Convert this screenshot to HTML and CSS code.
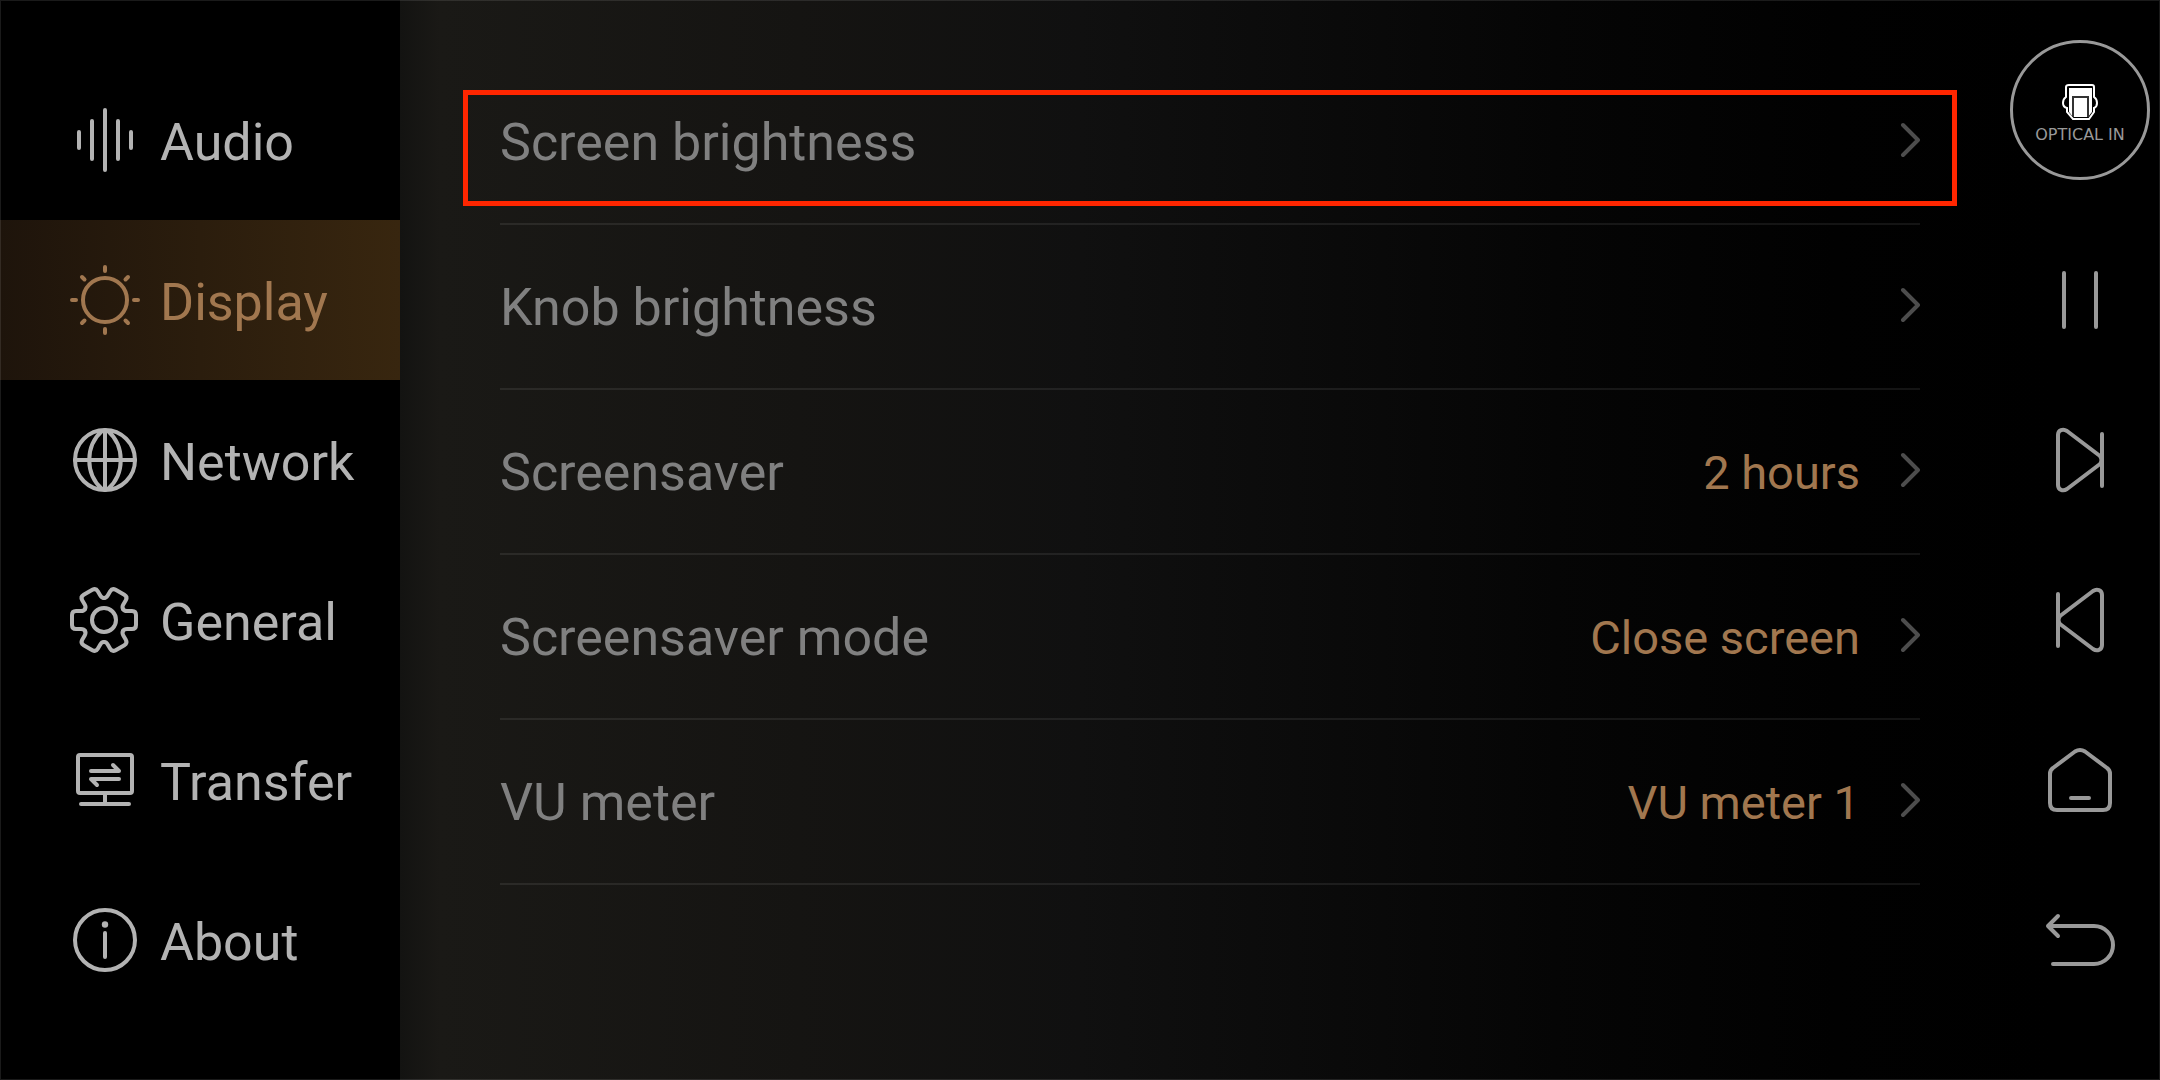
FILE: index.html
```html
<!DOCTYPE html>
<html lang="en">
  <head>
    <meta charset="UTF-8" />
    <meta name="viewport" content="width=device-width, initial-scale=1.0" />
    <title>Display settings</title>
    <link rel="stylesheet" href="styles.css">
  </head>
  <body>
    <div class="screen">
      <nav class="menu">
        <a href="#audio">
          <svg class="icon" viewBox="-35 -35 70 70" aria-hidden="true">
            <path d="M-26 -8V8M-13 -19V19M0 -30V30M13 -19V19M26 -8V8" />
          </svg>
          <span class="label">Audio</span>
        </a>
        <a href="#display" class="active" aria-current="page">
          <svg class="icon" viewBox="-35 -35 70 70" aria-hidden="true">
            <circle r="22" />
            <path d="M0 -33V-29M0 29V33M-33 0H-29M29 0H33M-23 -23L-20.5 -20.5M23 -23L20.5 -20.5M-23 23L-20.5 20.5M23 23L20.5 20.5" />
          </svg>
          <span class="label">Display</span>
        </a>
        <a href="#network">
          <svg class="icon" viewBox="-35 -35 70 70" aria-hidden="true">
            <circle r="30" />
            <path d="M-30 0H30M0 -30V30M-3 -29C-20 -14 -20 14 -3 29M3 -29C20 -14 20 14 3 29" />
          </svg>
          <span class="label">Network</span>
        </a>
        <a href="#general">
          <svg class="icon" viewBox="-34 -35 70 70" aria-hidden="true">
            <defs>
              <path id="tooth" d="M19 -11Q20 -9 23 -9H28Q32 -9 32 -5V5Q32 9 28 9H23Q20 9 19 11" />
            </defs>
            <use href="#tooth" />
            <use href="#tooth" transform="rotate(60)" />
            <use href="#tooth" transform="rotate(120)" />
            <use href="#tooth" transform="rotate(180)" />
            <use href="#tooth" transform="rotate(240)" />
            <use href="#tooth" transform="rotate(300)" />
            <circle r="12" />
          </svg>
          <span class="label">General</span>
        </a>
        <a href="#transfer">
          <svg class="icon" viewBox="-35 -35 70 70" aria-hidden="true">
            <rect x="-27" y="-25" width="54" height="38" rx="2" />
            <path d="M0 13V24M-24 24H24M-14 -9H14L8 -15M14 -1H-14L-8 5" />
          </svg>
          <span class="label">Transfer</span>
        </a>
        <a href="#about">
          <svg class="icon" viewBox="-35 -35 70 70" aria-hidden="true">
            <circle r="30" />
            <circle class="solid" cy="-15.5" r="3.2" />
            <path d="M0 -7V17" />
          </svg>
          <span class="label">About</span>
        </a>
      </nav>

      <main class="settings">
        <button class="row selected" type="button">
          <span class="label">Screen brightness</span>
          <svg class="chevron" viewBox="0 0 20 36" aria-hidden="true"><path d="M3 3L18 18L3 33" /></svg>
        </button>
        <button class="row" type="button">
          <span class="label">Knob brightness</span>
          <svg class="chevron" viewBox="0 0 20 36" aria-hidden="true"><path d="M3 3L18 18L3 33" /></svg>
        </button>
        <button class="row" type="button">
          <span class="label">Screensaver</span>
          <span class="value">2 hours</span>
          <svg class="chevron" viewBox="0 0 20 36" aria-hidden="true"><path d="M3 3L18 18L3 33" /></svg>
        </button>
        <button class="row" type="button">
          <span class="label">Screensaver mode</span>
          <span class="value">Close screen</span>
          <svg class="chevron" viewBox="0 0 20 36" aria-hidden="true"><path d="M3 3L18 18L3 33" /></svg>
        </button>
        <button class="row" type="button">
          <span class="label">VU meter</span>
          <span class="value">VU meter 1</span>
          <svg class="chevron" viewBox="0 0 20 36" aria-hidden="true"><path d="M3 3L18 18L3 33" /></svg>
        </button>
      </main>

      <aside class="controls">
        <button class="source" type="button">
          <svg class="plug" viewBox="0 0 38 38" aria-hidden="true">
            <path class="plug-shell" d="M8 2H31Q33 2 33 4V14Q36 16 36 20Q36 24 33 25V29L28 36H12L6 29V25Q2 24 2 20Q2 16 5 14V4Q5 2 8 2Z" />
            <path class="plug-body" d="M8 5H31V29L27 34H12L8 29Z" />
            <path class="plug-core" d="M12 34V14H27V34" />
          </svg>
          <span>OPTICAL IN</span>
        </button>
        <button type="button" aria-label="Pause">
          <svg class="icon" viewBox="-35 -35 70 70" aria-hidden="true">
            <path d="M-16 -27V27M16 -27V27" />
          </svg>
        </button>
        <button type="button" aria-label="Next">
          <svg class="icon" viewBox="-35 -35 70 70" aria-hidden="true">
            <path d="M-22 -25C-22 -30 -17 -31.5 -13 -29L20 -4Q23 0 20 4L-13 29C-17 31.5 -22 30 -22 25ZM22 -26V26" />
          </svg>
        </button>
        <button type="button" aria-label="Previous">
          <svg class="icon" viewBox="-35 -35 70 70" aria-hidden="true">
            <path d="M22 -25C22 -30 17 -31.5 13 -29L-20 -4Q-23 0 -20 4L13 29C17 31.5 22 30 22 25ZM-22 -26V26" />
          </svg>
        </button>
        <button type="button" aria-label="Home">
          <svg class="icon" viewBox="-35 -35 70 70" aria-hidden="true">
            <path d="M-5 -28.5Q0 -31.5 5 -28.5L27 -12Q30 -10 30 -6V23Q30 30 23 30H-23Q-30 30 -30 23V-6Q-30 -10 -27 -12ZM-9 18H9" />
          </svg>
        </button>
        <button type="button" aria-label="Back">
          <svg class="icon" viewBox="-35 -35 70 70" aria-hidden="true">
            <path d="M-22 -24L-32 -14L-22 -4M-32 -14H14a19 19 0 0 1 0 38H-27" />
          </svg>
        </button>
      </aside>
    </div>
  </body>
</html>
```

FILE: styles.css
```css
* {
  box-sizing: border-box;
}
body {
  margin: 0;
  background-color: #000;
  font-family: Roboto, sans-serif;
}
button {
  border: none;
  padding: 0;
  background: none;
  color: inherit;
  font-family: inherit;
  cursor: pointer;
}
.screen {
  display: flex;
  min-height: 100vh;
  background: linear-gradient(to right, #131311 400px, #1a1916 440px, #151412 37%, #101010 50%, #0b0b0b 60%, #050505 72%, #010101 85%, #000 95%);
}
/* thin frame over the whole screen */
.screen::after {
  content: "";
  position: fixed;
  inset: 0;
  border: 1px solid rgba(255, 255, 255, 0.1);
  pointer-events: none;
}
.icon {
  flex: none;
  width: 70px;
  height: 70px;
  fill: none;
  stroke: currentColor;
  stroke-width: 4;
  stroke-linecap: round;
  stroke-linejoin: round;
}
.solid {
  fill: currentColor;
  stroke: none;
}
.label,
.value {
  padding-top: 4px;
}

/* left menu */
.menu {
  flex: none;
  width: 400px;
  padding-top: 60px;
  background-color: #000;
}
.menu a {
  display: flex;
  align-items: center;
  gap: 20px;
  height: 160px;
  padding-left: 70px;
  color: #b3b3b3;
  font-size: 52px;
  text-decoration: none;
}
.menu .active {
  background: linear-gradient(to right, #1e140b, #38260f);
  color: #a1774f;
}

/* list of settings */
.settings {
  flex: 1;
  padding: 60px 80px 0 100px;
}
.row {
  position: relative;
  display: flex;
  align-items: center;
  width: 100%;
  height: 165px;
  padding-bottom: 3px;
  border-bottom: 2px solid rgba(255, 255, 255, 0.08);
  color: #808080;
  font-size: 52px;
  text-align: left;
}
.row .label {
  flex: 1;
}
.value {
  color: #a1774f;
  font-size: 47px;
}
.chevron {
  width: 20px;
  height: 36px;
  margin-left: 40px;
  fill: none;
  stroke: #4d4d4d;
  stroke-width: 4;
  stroke-linecap: round;
  stroke-linejoin: round;
}
.selected::before {
  content: "";
  position: absolute;
  inset: 30px -37px 17px;
  border: 5px solid #ff2600;
}

/* playback buttons */
.controls {
  flex: none;
  display: flex;
  flex-direction: column;
  align-items: center;
  width: 160px;
  padding-top: 40px;
  color: #999;
}
.controls button {
  display: flex;
  align-items: center;
  justify-content: center;
  width: 100%;
  height: 160px;
}
.controls .source {
  flex-direction: column;
  gap: 4px;
  width: 140px;
  height: 140px;
  margin-bottom: 40px;
  padding-top: 6px;
  border: 3px solid #999;
  border-radius: 50%;
  font-family: "DejaVu Sans", sans-serif;
  font-size: 16px;
}
.plug {
  width: 38px;
  height: 38px;
}
.plug-shell {
  fill: #000;
  stroke: #fff;
  stroke-width: 2;
}
.plug-body {
  fill: #fff;
}
.plug-core {
  fill: #fff;
  stroke: #333;
  stroke-width: 2;
}
```
